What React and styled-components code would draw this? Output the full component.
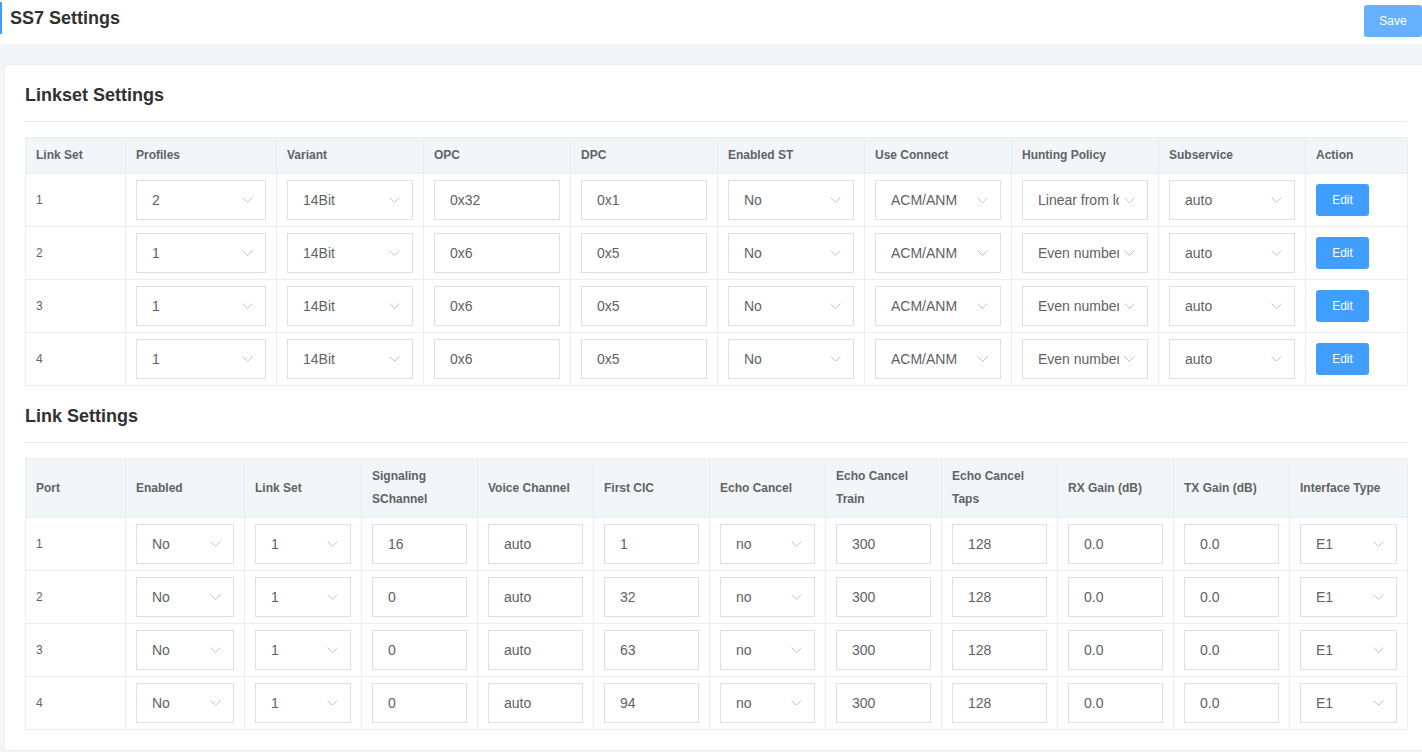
import React from 'react';
import styled, { createGlobalStyle } from 'styled-components';

const GlobalStyle = createGlobalStyle`
  * { box-sizing: border-box; }
  body {
    margin: 0;
    background: #f3f5f8;
    font-family: "Liberation Sans", Arial, sans-serif;
    color: #606266;
  }
`;

const linksets = [
  { id: 1, profile: '2', variant: '14Bit', opc: '0x32', dpc: '0x1', st: 'No', connect: 'ACM/ANM', hunting: 'Linear from lowest', sub: 'auto' },
  { id: 2, profile: '1', variant: '14Bit', opc: '0x6', dpc: '0x5', st: 'No', connect: 'ACM/ANM', hunting: 'Even numbers first', sub: 'auto' },
  { id: 3, profile: '1', variant: '14Bit', opc: '0x6', dpc: '0x5', st: 'No', connect: 'ACM/ANM', hunting: 'Even numbers first', sub: 'auto' },
  { id: 4, profile: '1', variant: '14Bit', opc: '0x6', dpc: '0x5', st: 'No', connect: 'ACM/ANM', hunting: 'Even numbers first', sub: 'auto' },
];

const links = [
  { port: 1, enabled: 'No', linkset: '1', sig: '16', voice: 'auto', cic: '1', echo: 'no', train: '300', taps: '128', rx: '0.0', tx: '0.0', type: 'E1' },
  { port: 2, enabled: 'No', linkset: '1', sig: '0', voice: 'auto', cic: '32', echo: 'no', train: '300', taps: '128', rx: '0.0', tx: '0.0', type: 'E1' },
  { port: 3, enabled: 'No', linkset: '1', sig: '0', voice: 'auto', cic: '63', echo: 'no', train: '300', taps: '128', rx: '0.0', tx: '0.0', type: 'E1' },
  { port: 4, enabled: 'No', linkset: '1', sig: '0', voice: 'auto', cic: '94', echo: 'no', train: '300', taps: '128', rx: '0.0', tx: '0.0', type: 'E1' },
];

// column widths measured off the design
const linksetCols = [100, 151, 147, 147, 147, 147, 147, 147, 147, 102];
const linkCols = [100, 119, 117, 116, 116, 116, 116, 116, 116, 116, 116, 118];

const Chevron = () => (
  <svg width="11" height="6" viewBox="0 0 11 6" fill="none">
    <path d="M0.5 0.5 L5.5 5.5 L10.5 0.5" stroke="#c0c4cc" strokeWidth="1" />
  </svg>
);

const Select = ({ value }) => (
  <SelectBox>
    <SelectText>{value}</SelectText>
    <Chevron />
  </SelectBox>
);

export default function App() {
  return (
    <>
      <GlobalStyle />
      <TopBar>
        <PageTitle>SS7 Settings</PageTitle>
        <SaveButton>Save</SaveButton>
      </TopBar>
      <Card>
        <SectionTitle>Linkset Settings</SectionTitle>
        <Divider />
        <Table>
          <colgroup>
            {linksetCols.map((w, i) => <col key={i} style={{ width: w }} />)}
          </colgroup>
          <thead>
            <tr>
              <Th>Link Set</Th>
              <Th>Profiles</Th>
              <Th>Variant</Th>
              <Th>OPC</Th>
              <Th>DPC</Th>
              <Th>Enabled ST</Th>
              <Th>Use Connect</Th>
              <Th>Hunting Policy</Th>
              <Th>Subservice</Th>
              <Th>Action</Th>
            </tr>
          </thead>
          <tbody>
            {linksets.map((r) => (
              <tr key={r.id}>
                <Td>{r.id}</Td>
                <Td><Select value={r.profile} /></Td>
                <Td><Select value={r.variant} /></Td>
                <Td><Input readOnly value={r.opc} /></Td>
                <Td><Input readOnly value={r.dpc} /></Td>
                <Td><Select value={r.st} /></Td>
                <Td><Select value={r.connect} /></Td>
                <Td><Select value={r.hunting} /></Td>
                <Td><Select value={r.sub} /></Td>
                <Td><EditButton>Edit</EditButton></Td>
              </tr>
            ))}
          </tbody>
        </Table>

        <SectionTitle $gap>Link Settings</SectionTitle>
        <Divider />
        <Table>
          <colgroup>
            {linkCols.map((w, i) => <col key={i} style={{ width: w }} />)}
          </colgroup>
          <thead>
            <tr>
              <Th>Port</Th>
              <Th>Enabled</Th>
              <Th>Link Set</Th>
              <Th>Signaling<br />SChannel</Th>
              <Th>Voice Channel</Th>
              <Th>First CIC</Th>
              <Th>Echo Cancel</Th>
              <Th>Echo Cancel<br />Train</Th>
              <Th>Echo Cancel<br />Taps</Th>
              <Th>RX Gain (dB)</Th>
              <Th>TX Gain (dB)</Th>
              <Th>Interface Type</Th>
            </tr>
          </thead>
          <tbody>
            {links.map((r) => (
              <tr key={r.port}>
                <Td>{r.port}</Td>
                <Td><Select value={r.enabled} /></Td>
                <Td><Select value={r.linkset} /></Td>
                <Td><Input readOnly value={r.sig} /></Td>
                <Td><Input readOnly value={r.voice} /></Td>
                <Td><Input readOnly value={r.cic} /></Td>
                <Td><Select value={r.echo} /></Td>
                <Td><Input readOnly value={r.train} /></Td>
                <Td><Input readOnly value={r.taps} /></Td>
                <Td><Input readOnly value={r.rx} /></Td>
                <Td><Input readOnly value={r.tx} /></Td>
                <Td><Select value={r.type} /></Td>
              </tr>
            ))}
          </tbody>
        </Table>
      </Card>
    </>
  );
}

const TopBar = styled.div`
  height: 44px;
  background: #fff;
  display: flex;
  align-items: flex-start;
  justify-content: space-between;
  margin-bottom: 20px;
`;

const PageTitle = styled.h1`
  margin: 2px 0 0 0;
  padding-left: 8px;
  border-left: 2px solid #409eff;
  font-size: 18px;
  line-height: 32px;
  font-weight: bold;
  color: #303133;
`;

const SaveButton = styled.button`
  margin-top: 5px;
  width: 58px;
  height: 32px;
  border: none;
  border-radius: 3px;
  background: #66b1ff;
  color: #fff;
  font-family: inherit;
  font-size: 12px;
`;

const Card = styled.div`
  margin-left: 4px;
  background: #fff;
  border: 1px solid #ebeef5;
  border-right: none;
  padding: 18px 15px 20px 20px;
`;

const SectionTitle = styled.h2`
  margin: ${(p) => (p.$gap ? '18px' : '0')} 0 0 0;
  font-size: 18px;
  line-height: 24px;
  font-weight: bold;
  color: #303133;
`;

const Divider = styled.div`
  height: 1px;
  background: #e4e7ed;
  margin: 14px 0 15px;
`;

const Table = styled.table`
  width: 1382px;
  table-layout: fixed;
  border-collapse: collapse;
  border: 1px solid #ebeef5;
  font-size: 12px;
`;

const Th = styled.th`
  background: #f3f6f9;
  border: 1px solid #ebeef5;
  padding: 6px 10px;
  line-height: 23px;
  text-align: left;
  font-weight: bold;
  color: #606266;
  white-space: nowrap;
`;

const Td = styled.td`
  border: 1px solid #ebeef5;
  padding: 6px 10px;
  line-height: 23px;
  color: #606266;
  vertical-align: middle;
`;

const fieldBase = `
  width: 100%;
  height: 40px;
  border: 1px solid #dcdfe6;
  border-radius: 0;
  background: #fff;
  font-family: "Liberation Sans", Arial, sans-serif;
  font-size: 14px;
  color: #606266;
`;

const Input = styled.input`
  ${fieldBase}
  display: block;
  padding: 0 15px;
  outline: none;
`;

const SelectBox = styled.div`
  ${fieldBase}
  display: flex;
  align-items: center;
  padding: 0 12px 0 15px;
  gap: 5px;
`;

const SelectText = styled.span`
  flex: 1;
  overflow: hidden;
  white-space: nowrap;
  line-height: 38px;
`;

const EditButton = styled.button`
  width: 53px;
  height: 32px;
  border: none;
  border-radius: 3px;
  background: #409eff;
  color: #fff;
  font-family: inherit;
  font-size: 12px;
`;
